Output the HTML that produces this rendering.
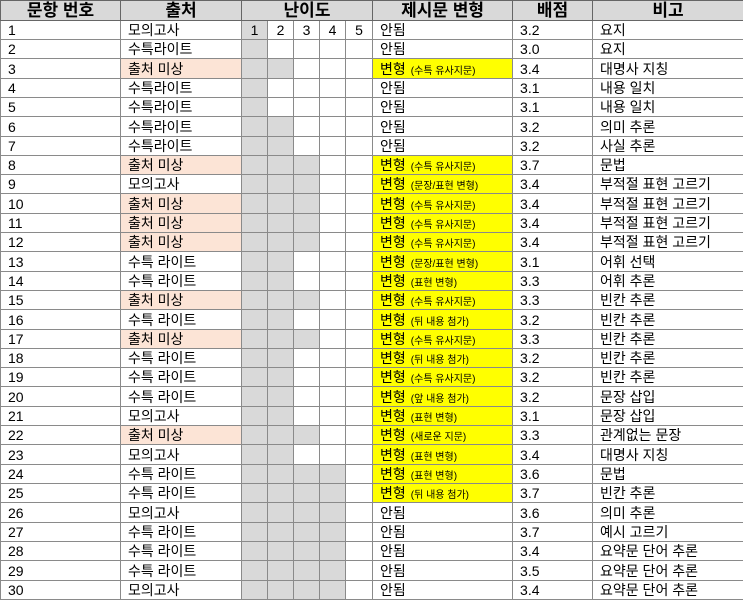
<!DOCTYPE html>
<html><head><meta charset="utf-8">
<style>
html,body{margin:0;padding:0;background:#fff;}
table{border-collapse:collapse;table-layout:fixed;width:743px;font-family:"Liberation Sans","Noto Sans CJK KR",sans-serif;font-size:14px;color:#000;}
td,th{border:1px solid #8a8a8a;padding:0 0 0 7px;white-space:nowrap;overflow:hidden;height:18px;line-height:16px;}
tr.t td{height:19px;}
th{background:#d9d9d9;font-size:17px;font-weight:bold;text-align:center;padding:0;height:19px;line-height:18px;border-color:#666;}
td.d{padding:0;text-align:center;}
.g{background:#d9d9d9;}
.p{background:#fce4d6;}
.y{background:#ffff00;}
small{font-size:10px;margin-left:5px;line-height:0;vertical-align:baseline;}
</style></head><body>
<table>
<colgroup><col style="width:120px"><col style="width:121px"><col style="width:26px"><col style="width:26px"><col style="width:26px"><col style="width:26px"><col style="width:27px"><col style="width:140px"><col style="width:80px"><col style="width:151px"></colgroup>
<tr><th>문항 번호</th><th>출처</th><th colspan="5">난이도</th><th>제시문 변형</th><th>배점</th><th>비고</th></tr>
<tr><td>1</td><td>모의고사</td><td class="d g">1</td><td class="d">2</td><td class="d">3</td><td class="d">4</td><td class="d">5</td><td>안됨</td><td>3.2</td><td>요지</td></tr>
<tr><td>2</td><td>수특라이트</td><td class="d g"></td><td class="d"></td><td class="d"></td><td class="d"></td><td class="d"></td><td>안됨</td><td>3.0</td><td>요지</td></tr>
<tr class="t"><td>3</td><td class="p">출처 미상</td><td class="d g"></td><td class="d g"></td><td class="d"></td><td class="d"></td><td class="d"></td><td class="y">변형<small>(수특 유사지문)</small></td><td>3.4</td><td>대명사 지칭</td></tr>
<tr><td>4</td><td>수특라이트</td><td class="d g"></td><td class="d"></td><td class="d"></td><td class="d"></td><td class="d"></td><td>안됨</td><td>3.1</td><td>내용 일치</td></tr>
<tr><td>5</td><td>수특라이트</td><td class="d g"></td><td class="d"></td><td class="d"></td><td class="d"></td><td class="d"></td><td>안됨</td><td>3.1</td><td>내용 일치</td></tr>
<tr class="t"><td>6</td><td>수특라이트</td><td class="d g"></td><td class="d g"></td><td class="d"></td><td class="d"></td><td class="d"></td><td>안됨</td><td>3.2</td><td>의미 추론</td></tr>
<tr><td>7</td><td>수특라이트</td><td class="d g"></td><td class="d g"></td><td class="d"></td><td class="d"></td><td class="d"></td><td>안됨</td><td>3.2</td><td>사실 추론</td></tr>
<tr><td>8</td><td class="p">출처 미상</td><td class="d g"></td><td class="d g"></td><td class="d g"></td><td class="d"></td><td class="d"></td><td class="y">변형<small>(수특 유사지문)</small></td><td>3.7</td><td>문법</td></tr>
<tr><td>9</td><td>모의고사</td><td class="d g"></td><td class="d g"></td><td class="d g"></td><td class="d"></td><td class="d"></td><td class="y">변형<small>(문장/표현 변형)</small></td><td>3.4</td><td>부적절 표현 고르기</td></tr>
<tr class="t"><td>10</td><td class="p">출처 미상</td><td class="d g"></td><td class="d g"></td><td class="d g"></td><td class="d"></td><td class="d"></td><td class="y">변형<small>(수특 유사지문)</small></td><td>3.4</td><td>부적절 표현 고르기</td></tr>
<tr><td>11</td><td class="p">출처 미상</td><td class="d g"></td><td class="d g"></td><td class="d g"></td><td class="d"></td><td class="d"></td><td class="y">변형<small>(수특 유사지문)</small></td><td>3.4</td><td>부적절 표현 고르기</td></tr>
<tr><td>12</td><td class="p">출처 미상</td><td class="d g"></td><td class="d g"></td><td class="d g"></td><td class="d"></td><td class="d"></td><td class="y">변형<small>(수특 유사지문)</small></td><td>3.4</td><td>부적절 표현 고르기</td></tr>
<tr class="t"><td>13</td><td>수특 라이트</td><td class="d g"></td><td class="d g"></td><td class="d"></td><td class="d"></td><td class="d"></td><td class="y">변형<small>(문장/표현 변형)</small></td><td>3.1</td><td>어휘 선택</td></tr>
<tr><td>14</td><td>수특 라이트</td><td class="d g"></td><td class="d g"></td><td class="d"></td><td class="d"></td><td class="d"></td><td class="y">변형<small>(표현 변형)</small></td><td>3.3</td><td>어휘 추론</td></tr>
<tr><td>15</td><td class="p">출처 미상</td><td class="d g"></td><td class="d g"></td><td class="d g"></td><td class="d"></td><td class="d"></td><td class="y">변형<small>(수특 유사지문)</small></td><td>3.3</td><td>빈칸 추론</td></tr>
<tr class="t"><td>16</td><td>수특 라이트</td><td class="d g"></td><td class="d g"></td><td class="d"></td><td class="d"></td><td class="d"></td><td class="y">변형<small>(뒤 내용 첨가)</small></td><td>3.2</td><td>빈칸 추론</td></tr>
<tr><td>17</td><td class="p">출처 미상</td><td class="d g"></td><td class="d g"></td><td class="d g"></td><td class="d"></td><td class="d"></td><td class="y">변형<small>(수특 유사지문)</small></td><td>3.3</td><td>빈칸 추론</td></tr>
<tr><td>18</td><td>수특 라이트</td><td class="d g"></td><td class="d g"></td><td class="d"></td><td class="d"></td><td class="d"></td><td class="y">변형<small>(뒤 내용 첨가)</small></td><td>3.2</td><td>빈칸 추론</td></tr>
<tr><td>19</td><td>수특 라이트</td><td class="d g"></td><td class="d g"></td><td class="d"></td><td class="d"></td><td class="d"></td><td class="y">변형<small>(수특 유사지문)</small></td><td>3.2</td><td>빈칸 추론</td></tr>
<tr class="t"><td>20</td><td>수특 라이트</td><td class="d g"></td><td class="d g"></td><td class="d"></td><td class="d"></td><td class="d"></td><td class="y">변형<small>(앞 내용 첨가)</small></td><td>3.2</td><td>문장 삽입</td></tr>
<tr><td>21</td><td>모의고사</td><td class="d g"></td><td class="d g"></td><td class="d"></td><td class="d"></td><td class="d"></td><td class="y">변형<small>(표현 변형)</small></td><td>3.1</td><td>문장 삽입</td></tr>
<tr><td>22</td><td class="p">출처 미상</td><td class="d g"></td><td class="d g"></td><td class="d g"></td><td class="d"></td><td class="d"></td><td class="y">변형<small>(새로운 지문)</small></td><td>3.3</td><td>관계없는 문장</td></tr>
<tr class="t"><td>23</td><td>모의고사</td><td class="d g"></td><td class="d g"></td><td class="d"></td><td class="d"></td><td class="d"></td><td class="y">변형<small>(표현 변형)</small></td><td>3.4</td><td>대명사 지칭</td></tr>
<tr><td>24</td><td>수특 라이트</td><td class="d g"></td><td class="d g"></td><td class="d g"></td><td class="d g"></td><td class="d"></td><td class="y">변형<small>(표현 변형)</small></td><td>3.6</td><td>문법</td></tr>
<tr><td>25</td><td>수특 라이트</td><td class="d g"></td><td class="d g"></td><td class="d g"></td><td class="d g"></td><td class="d"></td><td class="y">변형<small>(뒤 내용 첨가)</small></td><td>3.7</td><td>빈칸 추론</td></tr>
<tr class="t"><td>26</td><td>모의고사</td><td class="d g"></td><td class="d g"></td><td class="d g"></td><td class="d g"></td><td class="d"></td><td>안됨</td><td>3.6</td><td>의미 추론</td></tr>
<tr><td>27</td><td>수특 라이트</td><td class="d g"></td><td class="d g"></td><td class="d g"></td><td class="d g"></td><td class="d"></td><td>안됨</td><td>3.7</td><td>예시 고르기</td></tr>
<tr><td>28</td><td>수특 라이트</td><td class="d g"></td><td class="d g"></td><td class="d g"></td><td class="d g"></td><td class="d"></td><td>안됨</td><td>3.4</td><td>요약문 단어 추론</td></tr>
<tr class="t"><td>29</td><td>수특 라이트</td><td class="d g"></td><td class="d g"></td><td class="d g"></td><td class="d g"></td><td class="d"></td><td>안됨</td><td>3.5</td><td>요약문 단어 추론</td></tr>
<tr><td>30</td><td>모의고사</td><td class="d g"></td><td class="d g"></td><td class="d g"></td><td class="d g"></td><td class="d"></td><td>안됨</td><td>3.4</td><td>요약문 단어 추론</td></tr>
</table>
</body></html>
